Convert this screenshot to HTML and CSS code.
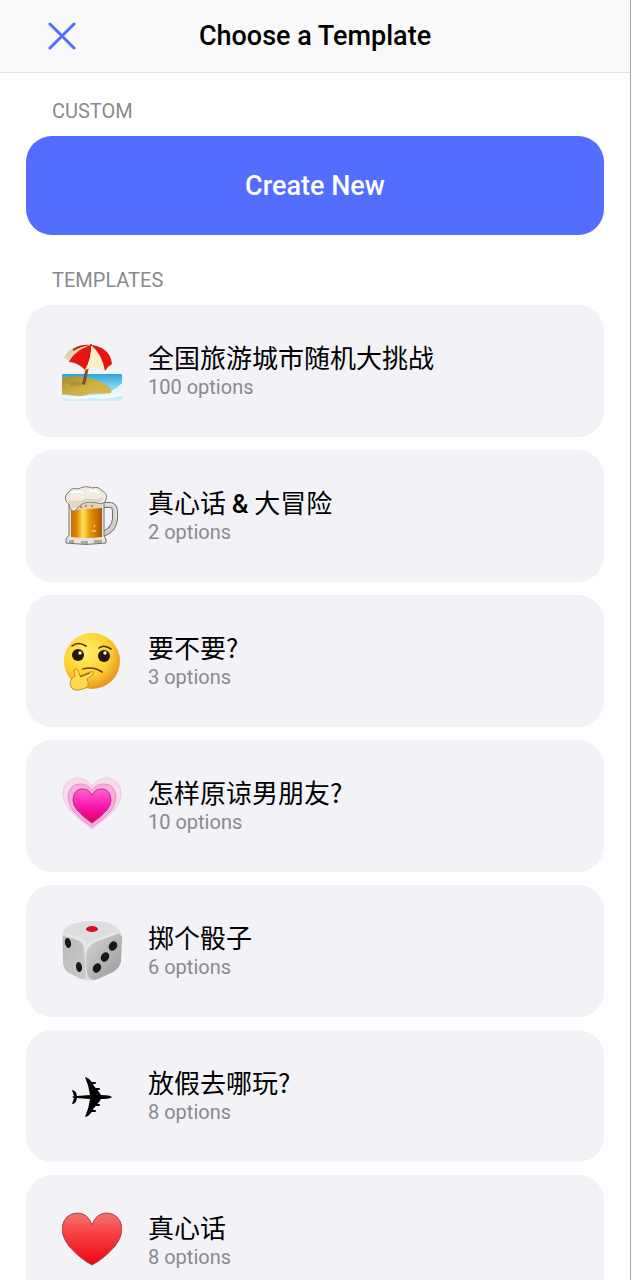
FILE: index.html
```html
<!DOCTYPE html>
<html lang="zh-CN">

<head>
    <meta charset="UTF-8">
    <meta name="viewport" content="width=device-width, initial-scale=1.0">
    <title>Choose a Template</title>
    <link rel="stylesheet" href="styles.css">
</head>

<body>

    <header class="navbar">
        <button class="close" type="button" aria-label="Close">
            <svg viewBox="0 0 28 28" width="28" height="28">
                <path d="M2 2 L26 26 M26 2 L2 26" stroke="#536dfe" stroke-width="3" stroke-linecap="round"/>
            </svg>
        </button>
        <h1>Choose a Template</h1>
    </header>

    <main class="content">
        <h2 class="section-title">CUSTOM</h2>
        <button class="create" type="button">Create New</button>

        <h2 class="section-title">TEMPLATES</h2>
        <ul class="templates">
            <li>
                <button class="card" type="button">
                    <!-- beach -->
                    <svg class="icon" viewBox="0 0 60 60">
                        <defs>
                            <linearGradient id="sea" x1="0" y1="0" x2="0" y2="1">
                                <stop offset="0" stop-color="#2da3dc"/>
                                <stop offset=".45" stop-color="#7fd3f0"/>
                                <stop offset="1" stop-color="#d5f0f8"/>
                            </linearGradient>
                            <linearGradient id="sand" x1="0" y1="0" x2="1" y2="1">
                                <stop offset="0" stop-color="#a58c28"/>
                                <stop offset=".5" stop-color="#cdb045"/>
                                <stop offset="1" stop-color="#dcb850"/>
                            </linearGradient>
                            <linearGradient id="cream" x1="0" y1="0" x2="1" y2="1">
                                <stop offset="0" stop-color="#d9c190"/>
                                <stop offset="1" stop-color="#fdf3cf"/>
                            </linearGradient>
                        </defs>
                        <rect x="0" y="33" width="60" height="27" rx="1" fill="url(#sea)"/>
                        <path d="M0 53 Q14 57 28 54 Q48 55 60 42 V55 Q46 59 30 57 Q14 60 0 57Z" fill="#fff" opacity=".75"/>
                        <path d="M0 37 C12 34 30 35 41 42 C47 45 51 49 49 52 C42 54 32 51 24 54 C15 57 6 52 0 54Z" fill="url(#sand)"/>
                        <path d="M8 42 Q15 38 22 43 Q15 46 8 45Z" fill="#89751f" opacity=".3"/>
                        <path d="M20 43 L24 26 H27 L23 44Z" fill="#80502a"/>
                        <!-- umbrella panels, left to right -->
                        <path d="M2 17 C6 8 16 3 29 4 C20 8 12 14 8 22 Q5 18 2 17Z" fill="url(#cream)"/>
                        <path d="M13 7 Q20 3 29 4 Q19 5 11 10 Q10 8 13 7Z" fill="#b4160f"/>
                        <path d="M29 4 C19 7 10 14 7 21 Q15 21 23 29 Q30 17 29 4Z" fill="#e81410"/>
                        <path d="M29 4 Q30 17 23 29 Q33 24 43 30 Q40 13 29 4Z" fill="#fbeec8"/>
                        <path d="M29 4 Q40 13 43 30 Q46 25 50 23 C49 11 40 5 29 4Z" fill="#e81410"/>
                        <circle cx="29" cy="4" r="1" fill="#b4160f"/>
                    </svg>
                    <span class="info">
                        <span class="name">全国旅游城市随机大挑战</span>
                        <span class="count">100 options</span>
                    </span>
                </button>
            </li>
            <li>
                <button class="card" type="button">
                    <!-- beer -->
                    <svg class="icon" viewBox="0 0 60 60">
                        <defs>
                            <linearGradient id="beer">
                                <stop offset="0" stop-color="#c36b09"/>
                                <stop offset=".2" stop-color="#e58b05"/>
                                <stop offset=".38" stop-color="#ffe45a"/>
                                <stop offset=".62" stop-color="#e69505"/>
                                <stop offset="1" stop-color="#ac5505"/>
                            </linearGradient>
                        </defs>
                        <path d="M41 19 H46 Q53 18 53 26 V33 Q52 44 41 48" fill="none" stroke="#74746f" stroke-width="6"/>
                        <path d="M41 19 H46 Q53 18 53 26 V33 Q52 44 41 48" fill="none" stroke="#cfd0cc" stroke-width="4"/>
                        <path d="M42 18 H46 Q54 17 54 26 V33" fill="none" stroke="#f3f3f1" stroke-width="1"/>
                        <path d="M7 15 H42 V49 L44 54 V57 Q24 60 4 57 V53 L7 49Z" fill="#e6e4df" stroke="#74716c" stroke-width="1"/>
                        <path d="M9 17 H40 V51 Q24 53 9 51Z" fill="url(#beer)"/>
                        <path d="M13 17 H40 V22 Q26 23 13 24Z" fill="#e4d2b8"/>
                        <path d="M7 54 H12 V57 H7Z M19 55 H26 V58 H19Z M32 54 H40 V57 H32Z" fill="#aaa8a3"/>
                        <path d="M4 15 Q2 9 7 6 Q9 1 16 3 Q24 -1 30 2 Q37 0 40 5 Q46 7 44 14 Q42 19 35 17 Q26 15 20 18 Q15 21 13 25 Q8 26 7 18Z" fill="#f1ece0" stroke="#847c71" stroke-width="1"/>
                        <path d="M7 14 Q17 17 24 12 Q33 15 42 11 Q40 17 34 16 Q25 14 18 18 Q13 22 9 23Z" fill="#cfc3ab" opacity=".5"/>
                        <path d="M10 7 Q16 4 21 7 M27 5 Q33 4 37 7" fill="none" stroke="#fff" stroke-width="2"/>
                        <circle cx="19" cy="21" r="1" fill="#9b6d42"/>
                        <circle cx="24" cy="20" r="1" fill="#a2753d"/>
                        <circle cx="30" cy="20" r="1" fill="#9b6d42"/>
                        <path d="M32 41 L33 39 M30 45 H34" stroke="#f6cc72" stroke-width="1.5"/>
                    </svg>
                    <span class="info">
                        <span class="name">真心话 <b>&amp;</b> 大冒险</span>
                        <span class="count">2 options</span>
                    </span>
                </button>
            </li>
            <li>
                <button class="card" type="button">
                    <!-- thinking face -->
                    <svg class="icon" viewBox="0 0 60 60">
                        <defs>
                            <radialGradient id="face" cx=".4" cy=".35" r=".7">
                                <stop offset="0" stop-color="#fff06a"/>
                                <stop offset=".6" stop-color="#fdd02f"/>
                                <stop offset="1" stop-color="#e88a1c"/>
                            </radialGradient>
                        </defs>
                        <circle cx="30" cy="30" r="28" fill="url(#face)"/>
                        <path d="M10 15 Q16 10 24 15" fill="none" stroke="#4a3012" stroke-width="1.6" stroke-linecap="round"/>
                        <path d="M37 17 Q42 13 49 18" fill="none" stroke="#4a3012" stroke-width="1.6" stroke-linecap="round"/>
                        <circle cx="16" cy="24" r="6" fill="#241809"/>
                        <circle cx="42" cy="25" r="6" fill="#241809"/>
                        <circle cx="18" cy="22" r="1.7" fill="#fff"/>
                        <circle cx="43" cy="22" r="1.7" fill="#fff"/>
                        <path d="M21 38 Q31 35 40 41" fill="none" stroke="#6b4213" stroke-width="1.7" stroke-linecap="round"/>
                        <path d="M12 39 Q14 36 16 39 L18 45 L28 41 Q32 40 32 42 Q31 45 25 48 Q29 56 21 58 Q12 61 9 56 Q6 49 13 45Z" fill="#ffdb50" stroke="#c98b20" stroke-width="1"/>
                        <path d="M18 46 L28 42" stroke="#7b4a15" stroke-width="1"/>
                    </svg>
                    <span class="info">
                        <span class="name">要不要?</span>
                        <span class="count">3 options</span>
                    </span>
                </button>
            </li>
            <li>
                <button class="card" type="button">
                    <!-- growing heart -->
                    <svg class="icon" viewBox="0 0 60 60">
                        <defs>
                            <linearGradient id="pink" x1="0" y1="0" x2="0" y2="1">
                                <stop offset="0" stop-color="#ff62d5"/>
                                <stop offset=".5" stop-color="#fb18b0"/>
                                <stop offset="1" stop-color="#e0005a"/>
                            </linearGradient>
                        </defs>
                        <path d="M30 53 Q18 45 8 34 Q1 26 1 17 Q2 3 15 2 Q25 2 30 10 Q35 2 45 2 Q58 3 59 17 Q59 26 52 34 Q42 45 30 53Z" fill="#f8dced" stroke="#f3c6e2" stroke-width="1"/>
                        <path d="M30 51 Q19 44 11 35 Q6 28 6 21 Q7 8 18 8 Q26 8 30 14 Q34 8 42 8 Q53 8 54 21 Q54 28 49 35 Q41 44 30 51Z" fill="#f5aeda" stroke="#ec93c9" stroke-width="1"/>
                        <path d="M30 47 Q21 41 15 34 Q11 29 11 24 Q12 13 20 13 Q27 13 30 19 Q33 13 40 13 Q48 13 49 24 Q49 29 45 34 Q39 41 30 47Z" fill="url(#pink)" stroke="#a33a82" stroke-width="1"/>
                    </svg>
                    <span class="info">
                        <span class="name">怎样原谅男朋友?</span>
                        <span class="count">10 options</span>
                    </span>
                </button>
            </li>
            <li>
                <button class="card" type="button">
                    <!-- die -->
                    <svg class="icon" viewBox="0 0 60 60">
                        <defs>
                            <linearGradient id="dieRight" x1="0" y1="0" x2="1" y2="1">
                                <stop offset="0" stop-color="#d4d6d6"/>
                                <stop offset="1" stop-color="#989a9a"/>
                            </linearGradient>
                            <linearGradient id="dieLeft" x1="0" y1="0" x2="1" y2="1">
                                <stop offset="0" stop-color="#b9baba"/>
                                <stop offset="1" stop-color="#c9caca"/>
                            </linearGradient>
                        </defs>
                        <path d="M8 4 Q18 0 31 0 Q46 0 53 5 Q60 9 60 17 L59 40 Q58 47 51 51 L36 58 Q28 61 19 58 L7 52 Q2 49 1 42 L0 16 Q0 8 8 4Z" fill="#dedede"/>
                        <path d="M1 15 Q10 17 17 20 Q22 23 22 31 L24 57 Q21 59 17 57 L7 52 Q2 49 1 42Z" fill="url(#dieLeft)"/>
                        <path d="M24 35 Q24 25 33 21 L52 14 Q59 11 60 17 L59 40 Q58 47 51 51 L36 58 Q26 61 25 51Z" fill="url(#dieRight)"/>
                        <path d="M4 13 Q14 16 22 20 Q24 22 24 30 Q25 23 32 20 L55 12" fill="none" stroke="#f3f3f3" stroke-width="2" opacity=".5"/>
                        <ellipse cx="30" cy="8" rx="6" ry="3" fill="#df0825"/>
                        <g fill="#171919">
                            <ellipse cx="6" cy="22" rx="3" ry="5" transform="rotate(-12 6 22)"/>
                            <ellipse cx="17" cy="46" rx="3" ry="5" transform="rotate(-8 17 46)"/>
                            <ellipse cx="51" cy="25" rx="4" ry="5" transform="rotate(32 51 25)"/>
                            <ellipse cx="43" cy="36" rx="4" ry="5" transform="rotate(32 43 36)"/>
                            <ellipse cx="35" cy="47" rx="4" ry="5" transform="rotate(32 35 47)"/>
                        </g>
                    </svg>
                    <span class="info">
                        <span class="name">掷个骰子</span>
                        <span class="count">6 options</span>
                    </span>
                </button>
            </li>
            <li>
                <button class="card" type="button">
                    <!-- airplane -->
                    <svg class="icon" viewBox="0 0 60 60">
                        <path d="M10 24 Q14 24 15 30 L28 29 Q27 20 23 11 Q27 12 29 15 L32 20 L37 26 L39 29 Q48 29 50 31 Q48 33 39 33 L37 36 L32 42 L29 47 Q27 50 23 51 Q27 42 28 33 L15 32 Q14 38 10 38 L12 32 L10 31 L12 30Z" fill="#000"/>
                        <path d="M29 17 H33 M33 23 H37 M29 45 H33 M33 39 H37" stroke="#000" stroke-width="2" stroke-linecap="round"/>
                    </svg>
                    <span class="info">
                        <span class="name">放假去哪玩?</span>
                        <span class="count">8 options</span>
                    </span>
                </button>
            </li>
            <li>
                <button class="card" type="button">
                    <!-- heart -->
                    <svg class="icon" viewBox="0 0 60 60">
                        <defs>
                            <linearGradient id="red" x1="0" y1="0" x2="0" y2="1">
                                <stop offset="0" stop-color="#f47472"/>
                                <stop offset=".4" stop-color="#f8403f"/>
                                <stop offset="1" stop-color="#e90415"/>
                            </linearGradient>
                        </defs>
                        <path d="M30 54 Q17 47 7 35 Q0 26 0 17 Q2 3 15 2 Q26 2 30 14 Q34 2 45 2 Q58 3 60 17 Q60 26 53 35 Q43 47 30 54Z" fill="url(#red)" stroke="#a94349" stroke-width="1"/>
                    </svg>
                    <span class="info">
                        <span class="name">真心话</span>
                        <span class="count">8 options</span>
                    </span>
                </button>
            </li>
        </ul>
    </main>

</body>

</html>
```
FILE: styles.css
```css
* {
    box-sizing: border-box;
    margin: 0;
    padding: 0;
}

html {
    height: 100%;
    overflow: hidden;
}

body {
    height: 100%;
    overflow: hidden;
    font-family: Roboto, "Noto Sans CJK SC", sans-serif;
    background-color: #ffffff;
    border-right: 1px solid #a0a0a0;
}

button {
    border: none;
    font-family: inherit;
    cursor: pointer;
}

.navbar {
    display: grid;
    grid-template-columns: 76px 1fr 76px;
    align-items: center;
    height: 73px;
    background-color: #f9f9f9;
    border-bottom: 1px solid #e0e0e0;
}

.close {
    display: flex;
    justify-content: flex-end;
    background: none;
}

.navbar h1 {
    font-size: 27px;
    font-weight: 500;
    line-height: 32px;
    text-align: center;
}

.content {
    padding: 0 26px;
}

.section-title {
    padding: 26px 26px 13px;
    color: #8a8a8e;
    font-size: 20px;
    font-weight: 400;
    line-height: 24px;
}

.create {
    display: block;
    width: 100%;
    height: 99px;
    margin-bottom: 7px;
    border-radius: 26px;
    background-color: #536dfe;
    color: #ffffff;
    font-size: 27px;
    font-weight: 500;
}

.templates {
    display: flex;
    flex-direction: column;
    gap: 13px;
    list-style: none;
}

.card {
    display: flex;
    align-items: center;
    gap: 26px;
    width: 100%;
    padding: 36px;
    border-radius: 26px;
    background-color: #f2f2f7;
    text-align: left;
}

.icon {
    flex: none;
    width: 60px;
    height: 60px;
}

.info {
    display: flex;
    flex-direction: column;
}

.name {
    color: #000000;
    font-family: "Noto Sans CJK SC", sans-serif;
    font-size: 26px;
    line-height: 32px;
}

.name b {
    font-family: Roboto, sans-serif;
    font-weight: 500;
    line-height: 24px;
}

.count {
    color: #8a8a8e;
    font-size: 20px;
    line-height: 28px;
}
```
